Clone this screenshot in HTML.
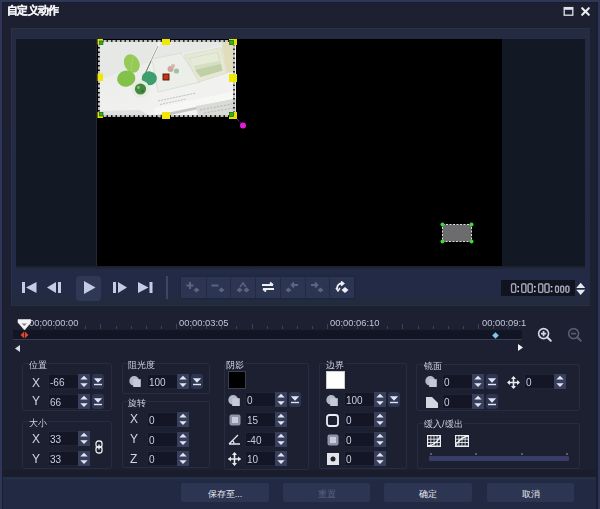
<!DOCTYPE html>
<html><head><meta charset="utf-8"><style>
*{margin:0;padding:0;box-sizing:border-box}
html,body{width:600px;height:509px;overflow:hidden;background:#1c2030;font-family:"Liberation Sans",sans-serif}
.a{position:absolute}
.t{white-space:nowrap;line-height:1;will-change:transform}
.inp{background:#141626;border:1px solid #1f2336;border-right:none}
.spin{background:#373f5c}
.drop{background:#2e3553;border-radius:3px}
.g{border:1px solid #282c41;border-radius:2px}
.lbl{color:#d0d4e2;font-size:9px;background:#1c2030;padding-right:1px}
.xy{color:#d3d7e3;font-size:12px}
.val{color:#c6cedd;font-size:10px}
.btn{border-radius:2px;background:#2c3552;color:#e4e6ee;font-size:9px;text-align:center;padding-top:1.5px}
</style></head>
<body>
<div class="a t " style="left:7px;top:5px;color:#f2f2f6;font-size:10.5px;font-weight:bold;letter-spacing:-0.7px;-webkit-text-stroke:0.35px #f2f2f6">自定义动作</div>
<svg class="a" style="left:563px;top:6px;" width="11" height="11" viewBox="0 0 11 11"><rect x="1.2" y="1.6" width="8.6" height="7.6" fill="none" stroke="#e2e2ea" stroke-width="1.3"/><rect x="1.2" y="1.6" width="8.6" height="2.2" fill="#e2e2ea"/></svg>
<svg class="a" style="left:580px;top:6px;" width="11" height="11" viewBox="0 0 11 11"><path d="M2.2 2.2 L8.8 8.8 M8.8 2.2 L2.2 8.8" stroke="#ececf2" stroke-width="2.1" stroke-linecap="round"/></svg>
<div class="a " style="left:11px;top:28px;width:579px;height:278px;background:linear-gradient(#252c41,#242b42 11px,#232a45 250px);border-top:1px solid #2a3049;border-left:1px solid #2b2f4c"></div>
<div class="a " style="left:12px;top:292px;width:578px;height:13px;background:linear-gradient(#232a45,#222b3c)"></div>
<div class="a " style="left:12px;top:305px;width:578px;height:1px;background:#283041"></div>
<div class="a " style="left:16px;top:39px;width:569px;height:227px;background:#131924"></div>
<div class="a " style="left:16px;top:266px;width:569px;height:3px;background:linear-gradient(#1a1f2b,#222938)"></div>
<div class="a " style="left:96px;top:39px;width:1px;height:227px;background:#222835"></div>
<div class="a " style="left:97px;top:39px;width:405px;height:227px;background:#000"></div>
<svg class="a" style="left:0px;top:0px;" width="260" height="135" viewBox="0 0 260 135">
<defs>
<linearGradient id="pg" x1="0" y1="0" x2="0.6" y2="1"><stop offset="0" stop-color="#e6e8e6"/><stop offset="0.5" stop-color="#eeefed"/><stop offset="1" stop-color="#f2f3f1"/></linearGradient>
<filter id="bl" x="-20%" y="-20%" width="140%" height="140%"><feGaussianBlur stdDeviation="0.7"/></filter>
<filter id="bl2" x="-20%" y="-20%" width="140%" height="140%"><feGaussianBlur stdDeviation="1.2"/></filter>
</defs>
<g>
<rect x="99" y="40.5" width="135" height="75.5" fill="url(#pg)"/>
<g filter="url(#bl)">
<path d="M99 40.5 H236 V58 L150 62 L99 80 Z" fill="#e6e8e5"/>
<path d="M150 60 L222 46 L236 44 L236 98 L154 114 Z" fill="#f1f2ef"/>
<path d="M152 59 L181 53 L200 82 L158 92 Z" fill="#eceee9" stroke="#d6d9d4" stroke-width="0.8"/>
<path d="M184 55 L221 47.5 L227 73 L199 82 Z" fill="#e6e8d6" stroke="#d8dcc8" stroke-width="0.8"/>
<path d="M188.5 58 L218 52 L222.5 70.5 L200.5 77 Z" fill="#d6dec2"/>
<path d="M190 58.5 L217 53 L219 61 L193 66 Z" fill="#e6ead8"/>
<path d="M195 70 L221 64 L222.5 70.5 L200.5 77 Z" fill="#bfcfa6"/>
<path d="M223 41 H234 V72 L227 73 L222 47 Z" fill="#e0dcbc"/>
<circle cx="170.5" cy="69" r="3" fill="#c9a99c"/>
<circle cx="176.5" cy="71" r="2.6" fill="#a4bfa8"/>
<circle cx="173" cy="66" r="2" fill="#d5b8a8"/>
<path d="M154 108 L236 91 L236 99 L156 116 Z" fill="#f7f8f6"/>
<path d="M157 115 L236 98.5 L236 101 L159 117.5 Z" fill="#c4c8c4"/>
<path d="M196 106 L236 99 L236 116 L198 116 Z" fill="#d9dbd7"/>
<path d="M200 110 L232 104 M204 113 L234 108" stroke="#b8bcb8" stroke-width="1.1" stroke-dasharray="2 1.5"/>
<path d="M158 101 L196 93" stroke="#b4b7bd" stroke-width="0.9" stroke-dasharray="2 1"/>
<path d="M160 104.5 L186 99" stroke="#bcbfc4" stroke-width="0.9" stroke-dasharray="2 1"/>
<path d="M99 111 L140 110 L150 116 L99 116 Z" fill="#dfe1df"/>
</g>
<g filter="url(#bl)">
<path d="M141 82 L160 42" stroke="#f4f5f4" stroke-width="2.6"/>
<path d="M142 80 L158 46" stroke="#8f9e8c" stroke-width="0.9"/>
<path d="M146 72 L151 61" stroke="#6f8a6a" stroke-width="1"/>
<ellipse cx="131.8" cy="63.5" rx="7.4" ry="9.6" transform="rotate(-28 131.8 63.5)" fill="#96ca56"/>
<ellipse cx="126.2" cy="78.6" rx="9.2" ry="8" transform="rotate(-12 126.2 78.6)" fill="#82c24b"/>
<ellipse cx="149.3" cy="78.2" rx="7.6" ry="6.9" transform="rotate(10 149.3 78.2)" fill="#3e9f6d"/>
<path d="M131 71 L133 56" stroke="#a6d476" stroke-width="0.8"/>
<circle cx="140.5" cy="89" r="8.8" fill="#e6ece0"/>
<circle cx="140.5" cy="89" r="5.6" fill="#458a40"/>
<circle cx="138.5" cy="87.5" r="1.4" fill="#8fc07e"/>
<circle cx="142.5" cy="91" r="1.2" fill="#2f6a2c"/>
</g>
<rect x="99" y="41" width="135" height="75" fill="none" stroke="#050505" stroke-width="1.6"/>
<rect x="99" y="41" width="135" height="75" fill="none" stroke="#f6f6f6" stroke-width="1.5" stroke-dasharray="3 1.5"/>
<rect x="97.5" y="39" width="5.5" height="5.5" fill="#e8e000"/>
<rect x="229" y="39" width="8" height="6" fill="#e8e000"/>
<rect x="97.5" y="112" width="5.5" height="6" fill="#e8e000"/>
<rect x="229" y="112" width="8" height="7" fill="#e8e000"/>
<rect x="99.5" y="41" width="3.5" height="3.5" fill="#26b526" stroke="#0a500a" stroke-width="0.6"/>
<rect x="229.5" y="40.5" width="4" height="4" fill="#26b526" stroke="#0a500a" stroke-width="0.6"/>
<rect x="99.5" y="112.5" width="3.5" height="3.5" fill="#26b526" stroke="#0a500a" stroke-width="0.6"/>
<rect x="229.5" y="112.5" width="4" height="4" fill="#26b526" stroke="#0a500a" stroke-width="0.6"/>
<rect x="162" y="39" width="8" height="6" fill="#f0e800"/>
<rect x="162" y="112" width="8" height="7" fill="#f0e800"/>
<rect x="97.5" y="73.5" width="5.5" height="7.5" fill="#f0e800"/>
<rect x="229" y="74" width="8" height="8" fill="#f0e800"/>
<rect x="163" y="74" width="6" height="6" fill="#c23510" stroke="#4a1406" stroke-width="0.9"/>
<path d="M237 119 L241 123" stroke="#b03ab0" stroke-width="1" stroke-dasharray="1 1"/>
<circle cx="243" cy="125.5" r="3" fill="#e21ed8"/>
</g>
</svg>
<svg class="a" style="left:440px;top:222px;" width="34" height="22" viewBox="0 0 34 22">
<rect x="2.5" y="2.5" width="29" height="17" fill="#6c6c6e" stroke="#ddd" stroke-width="1" stroke-dasharray="2 1.5"/>
<circle cx="2.5" cy="2.5" r="2" fill="#3ed83e"/><circle cx="31.5" cy="2.5" r="2" fill="#3ed83e"/>
<circle cx="2.5" cy="19.5" r="2" fill="#3ed83e"/><circle cx="31.5" cy="19.5" r="2" fill="#3ed83e"/>
</svg>
<svg class="a" style="left:22px;top:282px;" width="15" height="12" viewBox="0 0 15 12"><rect x="0" y="0" width="3" height="11" fill="#c6cbe4"/><path d="M4 5.5 L14.5 0 L14.5 11 Z" fill="#c6cbe4"/></svg>
<svg class="a" style="left:47px;top:282px;" width="15" height="12" viewBox="0 0 15 12"><path d="M0 5.5 L9 0 L9 11 Z" fill="#c6cbe4"/><rect x="11" y="0" width="3" height="11" fill="#c6cbe4"/></svg>
<div class="a " style="left:76px;top:276px;width:25px;height:25px;background:#2f3855;border-radius:4px"></div>
<svg class="a" style="left:84px;top:281px;" width="12" height="14" viewBox="0 0 12 14"><path d="M0 0 L11.5 6.5 L0 13 Z" fill="#c6cbe4"/></svg>
<svg class="a" style="left:113px;top:282px;" width="15" height="12" viewBox="0 0 15 12"><rect x="0" y="0" width="3" height="11" fill="#c6cbe4"/><path d="M5 0 L14 5.5 L5 11 Z" fill="#c6cbe4"/></svg>
<svg class="a" style="left:138px;top:282px;" width="16" height="12" viewBox="0 0 16 12"><path d="M0 0 L10.5 5.5 L0 11 Z" fill="#c6cbe4"/><rect x="11.5" y="0" width="3" height="11" fill="#c6cbe4"/></svg>
<div class="a " style="left:165.5px;top:276px;width:2.0px;height:23px;background:#3e4664"></div>
<div class="a " style="left:181px;top:277px;width:173px;height:21px;background:#2c3551;box-shadow:0 0 2px #1a2033"></div>
<div class="a " style="left:206px;top:277px;width:1px;height:21px;background:#232b42"></div>
<div class="a " style="left:230px;top:277px;width:1px;height:21px;background:#232b42"></div>
<div class="a " style="left:255px;top:277px;width:1px;height:21px;background:#232b42"></div>
<div class="a " style="left:280px;top:277px;width:1px;height:21px;background:#232b42"></div>
<div class="a " style="left:305px;top:277px;width:1px;height:21px;background:#232b42"></div>
<div class="a " style="left:329px;top:277px;width:1px;height:21px;background:#232b42"></div>
<svg class="a" style="left:185px;top:280.5px;" width="16" height="12" viewBox="0 0 16 12"><path d="M5 1 V8 M1.5 4.5 H8.5" stroke="#5b6483" stroke-width="2"/><path d="M11.5 6.5 L14.5 9 L11.5 11.5 L8.5 9 Z" fill="#5b6483"/></svg>
<svg class="a" style="left:210px;top:280.5px;" width="16" height="12" viewBox="0 0 16 12"><path d="M1.5 4.5 H8.5" stroke="#5b6483" stroke-width="2"/><path d="M11.5 6.5 L14.5 9 L11.5 11.5 L8.5 9 Z" fill="#5b6483"/></svg>
<svg class="a" style="left:235px;top:280.5px;" width="16" height="12" viewBox="0 0 16 12"><path d="M4.5 6.5 L7.5 9 L4.5 11.5 L1.5 9 Z M11.5 6.5 L14.5 9 L11.5 11.5 L8.5 9 Z" fill="#5b6483"/><path d="M5 6 L8 2 L11 6" stroke="#5b6483" stroke-width="1.5" fill="none"/></svg>
<svg class="a" style="left:260px;top:280.5px;" width="16" height="12" viewBox="0 0 16 12"><path d="M2 4 H13 M10 1.5 L13 4 M14 8 H3 M6 10.5 L3 8" stroke="#eef0f6" stroke-width="1.8" fill="none"/></svg>
<svg class="a" style="left:284px;top:280.5px;" width="16" height="12" viewBox="0 0 16 12"><path d="M4.5 6.5 L7.5 9 L4.5 11.5 L1.5 9 Z" fill="#5b6483"/><path d="M14 4 H8 M10 1.5 L7.5 4 L10 6.5" stroke="#5b6483" stroke-width="1.8" fill="none"/></svg>
<svg class="a" style="left:309px;top:280.5px;" width="16" height="12" viewBox="0 0 16 12"><path d="M11.5 6.5 L14.5 9 L11.5 11.5 L8.5 9 Z" fill="#5b6483"/><path d="M2 4 H8 M6 1.5 L8.5 4 L6 6.5" stroke="#5b6483" stroke-width="1.8" fill="none"/></svg>
<svg class="a" style="left:334px;top:280.5px;" width="16" height="12" viewBox="0 0 16 12"><path d="M11 6 L14.5 9 L11 12 L7.5 9 Z" fill="#eef0f6"/><path d="M3 8 Q3 2 9 2.5 M7 0.5 L9.5 2.5 L7 4.5" stroke="#eef0f6" stroke-width="1.8" fill="none"/><path d="M2 7 L4 10 L6 7" stroke="#eef0f6" stroke-width="1.5" fill="none"/></svg>
<div class="a " style="left:501px;top:280px;width:74px;height:16px;background:#11141f"></div>
<svg class="a" style="left:500px;top:280px;" width="75" height="16" viewBox="0 0 75 16"><rect x="11.500000000000023" y="3.9" width="4.2" height="8.5" rx="1.2" fill="none" stroke="#c9cedd" stroke-width="1.25"/><rect x="11.500000000000023" y="3.9" width="4.2" height="8.5" rx="1.2" fill="none" stroke="#60667a" stroke-width="0.4"/><rect x="21.699999999999953" y="3.9" width="4.2" height="8.5" rx="1.2" fill="none" stroke="#c9cedd" stroke-width="1.25"/><rect x="21.699999999999953" y="3.9" width="4.2" height="8.5" rx="1.2" fill="none" stroke="#60667a" stroke-width="0.4"/><rect x="28.100000000000044" y="3.9" width="4.2" height="8.5" rx="1.2" fill="none" stroke="#c9cedd" stroke-width="1.25"/><rect x="28.100000000000044" y="3.9" width="4.2" height="8.5" rx="1.2" fill="none" stroke="#60667a" stroke-width="0.4"/><rect x="38.600000000000044" y="3.9" width="4.2" height="8.5" rx="1.2" fill="none" stroke="#c9cedd" stroke-width="1.25"/><rect x="38.600000000000044" y="3.9" width="4.2" height="8.5" rx="1.2" fill="none" stroke="#60667a" stroke-width="0.4"/><rect x="44.9" y="3.9" width="4.2" height="8.5" rx="1.2" fill="none" stroke="#c9cedd" stroke-width="1.25"/><rect x="44.9" y="3.9" width="4.2" height="8.5" rx="1.2" fill="none" stroke="#60667a" stroke-width="0.4"/><rect x="55.50000000000002" y="6.099999999999989" width="3.0" height="6.2" rx="1.2" fill="none" stroke="#c9cedd" stroke-width="1.25"/><rect x="55.50000000000002" y="6.099999999999989" width="3.0" height="6.2" rx="1.2" fill="none" stroke="#60667a" stroke-width="0.4"/><rect x="60.69999999999995" y="6.099999999999989" width="3.0" height="6.2" rx="1.2" fill="none" stroke="#c9cedd" stroke-width="1.25"/><rect x="60.69999999999995" y="6.099999999999989" width="3.0" height="6.2" rx="1.2" fill="none" stroke="#60667a" stroke-width="0.4"/><rect x="65.9" y="6.099999999999989" width="3.0" height="6.2" rx="1.2" fill="none" stroke="#c9cedd" stroke-width="1.25"/><rect x="65.9" y="6.099999999999989" width="3.0" height="6.2" rx="1.2" fill="none" stroke="#60667a" stroke-width="0.4"/><rect x="17.400000000000045" y="6" width="1.6" height="1.6" fill="#c9cedd"/><rect x="17.400000000000045" y="10.5" width="1.6" height="1.6" fill="#c9cedd"/><rect x="33.99999999999996" y="6" width="1.6" height="1.6" fill="#c9cedd"/><rect x="33.99999999999996" y="10.5" width="1.6" height="1.6" fill="#c9cedd"/><rect x="50.800000000000026" y="6" width="1.6" height="1.6" fill="#c9cedd"/><rect x="50.800000000000026" y="10.5" width="1.6" height="1.6" fill="#c9cedd"/></svg>
<svg class="a" style="left:575px;top:282px;" width="12" height="14" viewBox="0 0 12 14"><path d="M1.2 6 L5.7 0.8 L10.2 6 Z M1.2 7.8 L5.7 13 L10.2 7.8 Z" fill="#e8eaf2"/></svg>
<div class="a t " style="left:29px;top:318px;color:#bfc6d8;font-size:9.4px">00:00:00:00</div>
<div class="a t " style="left:179px;top:318px;color:#bfc6d8;font-size:9.4px">00:00:03:05</div>
<div class="a t " style="left:330px;top:318px;color:#bfc6d8;font-size:9.4px">00:00:06:10</div>
<div class="a t " style="left:482px;top:318px;color:#bfc6d8;font-size:9.4px">00:00:09:1</div>
<div class="a " style="left:25px;top:324px;width:1px;height:5px;background:#3c4258"></div>
<div class="a " style="left:40px;top:326px;width:1px;height:3px;background:#3c4258"></div>
<div class="a " style="left:55px;top:326px;width:1px;height:3px;background:#3c4258"></div>
<div class="a " style="left:70px;top:326px;width:1px;height:3px;background:#3c4258"></div>
<div class="a " style="left:85px;top:326px;width:1px;height:3px;background:#3c4258"></div>
<div class="a " style="left:100px;top:324px;width:1px;height:5px;background:#3c4258"></div>
<div class="a " style="left:116px;top:326px;width:1px;height:3px;background:#3c4258"></div>
<div class="a " style="left:131px;top:326px;width:1px;height:3px;background:#3c4258"></div>
<div class="a " style="left:146px;top:326px;width:1px;height:3px;background:#3c4258"></div>
<div class="a " style="left:161px;top:326px;width:1px;height:3px;background:#3c4258"></div>
<div class="a " style="left:176px;top:324px;width:1px;height:5px;background:#3c4258"></div>
<div class="a " style="left:191px;top:326px;width:1px;height:3px;background:#3c4258"></div>
<div class="a " style="left:206px;top:326px;width:1px;height:3px;background:#3c4258"></div>
<div class="a " style="left:221px;top:326px;width:1px;height:3px;background:#3c4258"></div>
<div class="a " style="left:236px;top:326px;width:1px;height:3px;background:#3c4258"></div>
<div class="a " style="left:252px;top:324px;width:1px;height:5px;background:#3c4258"></div>
<div class="a " style="left:267px;top:326px;width:1px;height:3px;background:#3c4258"></div>
<div class="a " style="left:282px;top:326px;width:1px;height:3px;background:#3c4258"></div>
<div class="a " style="left:297px;top:326px;width:1px;height:3px;background:#3c4258"></div>
<div class="a " style="left:312px;top:326px;width:1px;height:3px;background:#3c4258"></div>
<div class="a " style="left:327px;top:324px;width:1px;height:5px;background:#3c4258"></div>
<div class="a " style="left:342px;top:326px;width:1px;height:3px;background:#3c4258"></div>
<div class="a " style="left:357px;top:326px;width:1px;height:3px;background:#3c4258"></div>
<div class="a " style="left:372px;top:326px;width:1px;height:3px;background:#3c4258"></div>
<div class="a " style="left:387px;top:326px;width:1px;height:3px;background:#3c4258"></div>
<div class="a " style="left:402px;top:324px;width:1px;height:5px;background:#3c4258"></div>
<div class="a " style="left:418px;top:326px;width:1px;height:3px;background:#3c4258"></div>
<div class="a " style="left:433px;top:326px;width:1px;height:3px;background:#3c4258"></div>
<div class="a " style="left:448px;top:326px;width:1px;height:3px;background:#3c4258"></div>
<div class="a " style="left:463px;top:326px;width:1px;height:3px;background:#3c4258"></div>
<div class="a " style="left:478px;top:324px;width:1px;height:5px;background:#3c4258"></div>
<div class="a " style="left:493px;top:326px;width:1px;height:3px;background:#3c4258"></div>
<div class="a " style="left:508px;top:326px;width:1px;height:3px;background:#3c4258"></div>
<div class="a " style="left:13px;top:330px;width:509px;height:10px;background:#121524;border-bottom:1px solid #383d54"></div>
<svg class="a" style="left:17px;top:319px;" width="15" height="12" viewBox="0 0 15 12"><path d="M1 0.6 H13.8 V3.4 L7.5 11 L1 3.4 Z" fill="#f4f4f6" stroke="#f4f4f6" stroke-width="0.6" stroke-linejoin="round"/><path d="M4.6 4.6 H9.9 L7.3 7 Z" fill="#7e7e88"/></svg>
<svg class="a" style="left:20px;top:331px;" width="9" height="8" viewBox="0 0 9 8"><path d="M4.1 0.6 L0.5 3.9 L4.1 7.2 Z" fill="#e4462c"/><path d="M4.9 0.6 L8.5 3.9 L4.9 7.2 Z" fill="#e4462c"/></svg>
<svg class="a" style="left:491px;top:331px;" width="9" height="9" viewBox="0 0 9 9"><path d="M4.5 1.2 L7.8 4.5 L4.5 7.8 L1.2 4.5 Z" fill="#7cc9ea"/></svg>
<svg class="a" style="left:15px;top:345px;" width="6" height="8" viewBox="0 0 6 8"><path d="M5 0 L5 7 L0 3.5 Z" fill="#d8dce8"/></svg>
<svg class="a" style="left:518px;top:344px;" width="6" height="8" viewBox="0 0 6 8"><path d="M0 0 L0 7 L5 3.5 Z" fill="#f2f2f6"/></svg>
<svg class="a" style="left:537px;top:327px;" width="16" height="16" viewBox="0 0 16 16"><circle cx="6.6" cy="6.6" r="5" fill="none" stroke="#d6d9e3" stroke-width="1.6"/><path d="M4 6.6 H9.2 M6.6 4 V9.2" stroke="#d6d9e3" stroke-width="1.7"/><path d="M10.2 10.2 L13.8 13.8" stroke="#d6d9e3" stroke-width="2" stroke-linecap="round"/></svg>
<svg class="a" style="left:567px;top:327px;" width="16" height="16" viewBox="0 0 16 16"><circle cx="6.6" cy="6.6" r="5" fill="none" stroke="#555c74" stroke-width="1.6"/><path d="M4 6.6 H9.2" stroke="#555c74" stroke-width="1.7"/><path d="M10.2 10.2 L13.8 13.8" stroke="#555c74" stroke-width="2" stroke-linecap="round"/></svg>
<div class="a g" style="left:22px;top:363px;width:90px;height:48px;"></div>
<div class="a t lbl" style="left:29px;top:360.5px;">位置</div>
<div class="a t xy" style="left:32px;top:377px;">X</div>
<div class="a inp" style="left:48px;top:374px;width:30px;height:15px;"></div>
<div class="a t val" style="left:50px;top:378px;">-66</div>
<svg class="a spin" style="left:78px;top:374px" width="12" height="15" viewBox="0 0 12 15"><path d="M2.3 5.6 L6 1.8 L9.7 5.6 Z M2.3 9.2 L6 13 L9.7 9.2 Z" fill="#e2e5ef"/></svg>
<svg class="a drop" style="left:92px;top:374px" width="12" height="15" viewBox="0 0 12 15"><path d="M1.8 4.2 H10.2 L6 8.8 Z" fill="#e2e5ef"/><rect x="2" y="9.8" width="8" height="1.4" fill="#e2e5ef"/></svg>
<div class="a t xy" style="left:32px;top:395px;">Y</div>
<div class="a inp" style="left:48px;top:394px;width:30px;height:15px;"></div>
<div class="a t val" style="left:50px;top:398px;">66</div>
<svg class="a spin" style="left:78px;top:394px" width="12" height="15" viewBox="0 0 12 15"><path d="M2.3 5.6 L6 1.8 L9.7 5.6 Z M2.3 9.2 L6 13 L9.7 9.2 Z" fill="#e2e5ef"/></svg>
<svg class="a drop" style="left:92px;top:394px" width="12" height="15" viewBox="0 0 12 15"><path d="M1.8 4.2 H10.2 L6 8.8 Z" fill="#e2e5ef"/><rect x="2" y="9.8" width="8" height="1.4" fill="#e2e5ef"/></svg>
<div class="a g" style="left:22px;top:421px;width:90px;height:48px;"></div>
<div class="a t lbl" style="left:29px;top:418.5px;">大小</div>
<div class="a t xy" style="left:32px;top:433px;">X</div>
<div class="a inp" style="left:48px;top:431px;width:30px;height:15px;"></div>
<div class="a t val" style="left:50px;top:435px;">33</div>
<svg class="a spin" style="left:78px;top:431px" width="12" height="15" viewBox="0 0 12 15"><path d="M2.3 5.6 L6 1.8 L9.7 5.6 Z M2.3 9.2 L6 13 L9.7 9.2 Z" fill="#e2e5ef"/></svg>
<div class="a t xy" style="left:32px;top:453px;">Y</div>
<div class="a inp" style="left:48px;top:451px;width:30px;height:15px;"></div>
<div class="a t val" style="left:50px;top:455px;">33</div>
<svg class="a spin" style="left:78px;top:451px" width="12" height="15" viewBox="0 0 12 15"><path d="M2.3 5.6 L6 1.8 L9.7 5.6 Z M2.3 9.2 L6 13 L9.7 9.2 Z" fill="#e2e5ef"/></svg>
<svg class="a" style="left:95px;top:440px;" width="8" height="14" viewBox="0 0 8 14"><rect x="1" y="1" width="6" height="6.5" rx="2.5" fill="none" stroke="#e8eaf0" stroke-width="1.3"/><rect x="1" y="6.5" width="6" height="6.5" rx="2.5" fill="none" stroke="#e8eaf0" stroke-width="1.3"/><path d="M4 4.5 V9.5" stroke="#e8eaf0" stroke-width="1.3"/></svg>
<div class="a g" style="left:122px;top:363px;width:88px;height:31px;"></div>
<div class="a t lbl" style="left:128px;top:360.5px;">阻光度</div>
<svg class="a" style="left:129px;top:376px;" width="12" height="11" viewBox="0 0 12 11"><circle cx="5.2" cy="4.9" r="4.9" fill="#b4b8c8"/><rect x="4.2" y="3.2" width="7.6" height="7.8" fill="#c6c9d7"/></svg>
<div class="a inp" style="left:147px;top:374px;width:30px;height:15px;"></div>
<div class="a t val" style="left:149px;top:378px;">100</div>
<svg class="a spin" style="left:177px;top:374px" width="12" height="15" viewBox="0 0 12 15"><path d="M2.3 5.6 L6 1.8 L9.7 5.6 Z M2.3 9.2 L6 13 L9.7 9.2 Z" fill="#e2e5ef"/></svg>
<svg class="a drop" style="left:191px;top:374px" width="12" height="15" viewBox="0 0 12 15"><path d="M1.8 4.2 H10.2 L6 8.8 Z" fill="#e2e5ef"/><rect x="2" y="9.8" width="8" height="1.4" fill="#e2e5ef"/></svg>
<div class="a g" style="left:122px;top:401px;width:88px;height:67px;"></div>
<div class="a t lbl" style="left:128px;top:398.5px;">旋转</div>
<div class="a t xy" style="left:130px;top:413px;">X</div>
<div class="a inp" style="left:147px;top:412px;width:30px;height:15px;"></div>
<div class="a t val" style="left:149px;top:416px;">0</div>
<svg class="a spin" style="left:177px;top:412px" width="12" height="15" viewBox="0 0 12 15"><path d="M2.3 5.6 L6 1.8 L9.7 5.6 Z M2.3 9.2 L6 13 L9.7 9.2 Z" fill="#e2e5ef"/></svg>
<div class="a t xy" style="left:130px;top:433px;">Y</div>
<div class="a inp" style="left:147px;top:432px;width:30px;height:15px;"></div>
<div class="a t val" style="left:149px;top:436px;">0</div>
<svg class="a spin" style="left:177px;top:432px" width="12" height="15" viewBox="0 0 12 15"><path d="M2.3 5.6 L6 1.8 L9.7 5.6 Z M2.3 9.2 L6 13 L9.7 9.2 Z" fill="#e2e5ef"/></svg>
<div class="a t xy" style="left:130px;top:453px;">Z</div>
<div class="a inp" style="left:147px;top:451px;width:30px;height:15px;"></div>
<div class="a t val" style="left:149px;top:455px;">0</div>
<svg class="a spin" style="left:177px;top:451px" width="12" height="15" viewBox="0 0 12 15"><path d="M2.3 5.6 L6 1.8 L9.7 5.6 Z M2.3 9.2 L6 13 L9.7 9.2 Z" fill="#e2e5ef"/></svg>
<div class="a g" style="left:224px;top:363px;width:85px;height:107px;"></div>
<div class="a t lbl" style="left:226px;top:360.5px;">阴影</div>
<div class="a " style="left:228px;top:371px;width:18px;height:18px;background:#000;border:1px solid #3a3f55"></div>
<svg class="a" style="left:228px;top:395px;" width="12" height="11" viewBox="0 0 12 11"><circle cx="5.2" cy="4.9" r="4.9" fill="#b4b8c8"/><rect x="4.2" y="3.2" width="7.6" height="7.8" fill="#c6c9d7"/></svg>
<div class="a inp" style="left:245px;top:392px;width:30px;height:15px;"></div>
<div class="a t val" style="left:247px;top:396px;">0</div>
<svg class="a spin" style="left:275px;top:392px" width="12" height="15" viewBox="0 0 12 15"><path d="M2.3 5.6 L6 1.8 L9.7 5.6 Z M2.3 9.2 L6 13 L9.7 9.2 Z" fill="#e2e5ef"/></svg>
<svg class="a drop" style="left:289px;top:392px" width="12" height="15" viewBox="0 0 12 15"><path d="M1.8 4.2 H10.2 L6 8.8 Z" fill="#e2e5ef"/><rect x="2" y="9.8" width="8" height="1.4" fill="#e2e5ef"/></svg>
<svg class="a" style="left:229px;top:414px;" width="12" height="12" viewBox="0 0 12 12"><rect x="0.5" y="0.5" width="11" height="11" rx="2" fill="#8e94a8"/><rect x="3" y="3" width="6" height="6" fill="#c8ccd8"/></svg>
<div class="a inp" style="left:245px;top:412px;width:30px;height:15px;"></div>
<div class="a t val" style="left:247px;top:416px;">15</div>
<svg class="a spin" style="left:275px;top:412px" width="12" height="15" viewBox="0 0 12 15"><path d="M2.3 5.6 L6 1.8 L9.7 5.6 Z M2.3 9.2 L6 13 L9.7 9.2 Z" fill="#e2e5ef"/></svg>
<svg class="a" style="left:228px;top:433px;" width="13" height="12" viewBox="0 0 13 12"><path d="M1 11 H12 M1 11 L10 2 M6 11 Q6 7 3.5 8.5" stroke="#e0e3ec" stroke-width="1.4" fill="none"/></svg>
<div class="a inp" style="left:245px;top:432px;width:30px;height:15px;"></div>
<div class="a t val" style="left:247px;top:436px;">-40</div>
<svg class="a spin" style="left:275px;top:432px" width="12" height="15" viewBox="0 0 12 15"><path d="M2.3 5.6 L6 1.8 L9.7 5.6 Z M2.3 9.2 L6 13 L9.7 9.2 Z" fill="#e2e5ef"/></svg>
<svg class="a" style="left:228px;top:452px;" width="13" height="14" viewBox="0 0 13 14"><path d="M6.5 1 V13 M0.5 7 H12.5" stroke="#e8eaf0" stroke-width="1.6"/><path d="M6.5 0 L9 3 H4 Z M6.5 14 L9 11 H4 Z M0 7 L3 4.5 V9.5 Z M13 7 L10 4.5 V9.5 Z" fill="#e8eaf0"/></svg>
<div class="a inp" style="left:245px;top:451px;width:30px;height:15px;"></div>
<div class="a t val" style="left:247px;top:455px;">10</div>
<svg class="a spin" style="left:275px;top:451px" width="12" height="15" viewBox="0 0 12 15"><path d="M2.3 5.6 L6 1.8 L9.7 5.6 Z M2.3 9.2 L6 13 L9.7 9.2 Z" fill="#e2e5ef"/></svg>
<div class="a g" style="left:319px;top:363px;width:88px;height:106px;"></div>
<div class="a t lbl" style="left:326px;top:360.5px;">边界</div>
<div class="a " style="left:326px;top:371px;width:19px;height:18px;background:#fff;border:1px solid #ccc"></div>
<svg class="a" style="left:326px;top:395px;" width="12" height="11" viewBox="0 0 12 11"><circle cx="5.2" cy="4.9" r="4.9" fill="#b4b8c8"/><rect x="4.2" y="3.2" width="7.6" height="7.8" fill="#c6c9d7"/></svg>
<div class="a inp" style="left:344px;top:392px;width:30px;height:15px;"></div>
<div class="a t val" style="left:346px;top:396px;">100</div>
<svg class="a spin" style="left:374px;top:392px" width="12" height="15" viewBox="0 0 12 15"><path d="M2.3 5.6 L6 1.8 L9.7 5.6 Z M2.3 9.2 L6 13 L9.7 9.2 Z" fill="#e2e5ef"/></svg>
<svg class="a drop" style="left:388px;top:392px" width="12" height="15" viewBox="0 0 12 15"><path d="M1.8 4.2 H10.2 L6 8.8 Z" fill="#e2e5ef"/><rect x="2" y="9.8" width="8" height="1.4" fill="#e2e5ef"/></svg>
<svg class="a" style="left:326px;top:414px;" width="13" height="13" viewBox="0 0 13 13"><rect x="1" y="1" width="11" height="11" rx="2.5" fill="none" stroke="#eceef4" stroke-width="1.8"/></svg>
<div class="a inp" style="left:344px;top:412px;width:30px;height:15px;"></div>
<div class="a t val" style="left:346px;top:416px;">0</div>
<svg class="a spin" style="left:374px;top:412px" width="12" height="15" viewBox="0 0 12 15"><path d="M2.3 5.6 L6 1.8 L9.7 5.6 Z M2.3 9.2 L6 13 L9.7 9.2 Z" fill="#e2e5ef"/></svg>
<svg class="a" style="left:327px;top:434px;" width="12" height="12" viewBox="0 0 12 12"><rect x="0.5" y="0.5" width="11" height="11" rx="2" fill="#8e94a8"/><rect x="3" y="3" width="6" height="6" fill="#c8ccd8"/></svg>
<div class="a inp" style="left:344px;top:432px;width:30px;height:15px;"></div>
<div class="a t val" style="left:346px;top:436px;">0</div>
<svg class="a spin" style="left:374px;top:432px" width="12" height="15" viewBox="0 0 12 15"><path d="M2.3 5.6 L6 1.8 L9.7 5.6 Z M2.3 9.2 L6 13 L9.7 9.2 Z" fill="#e2e5ef"/></svg>
<svg class="a" style="left:327px;top:453px;" width="12" height="12" viewBox="0 0 12 12"><rect x="0" y="0" width="12" height="12" fill="#e2e4ec"/><circle cx="6" cy="6" r="2.5" fill="#222"/></svg>
<div class="a inp" style="left:344px;top:451px;width:30px;height:15px;"></div>
<div class="a t val" style="left:346px;top:455px;">0</div>
<svg class="a spin" style="left:374px;top:451px" width="12" height="15" viewBox="0 0 12 15"><path d="M2.3 5.6 L6 1.8 L9.7 5.6 Z M2.3 9.2 L6 13 L9.7 9.2 Z" fill="#e2e5ef"/></svg>
<div class="a g" style="left:416px;top:364px;width:164px;height:47px;"></div>
<div class="a t lbl" style="left:424px;top:361.5px;">镜面</div>
<svg class="a" style="left:425px;top:376px;" width="12" height="11" viewBox="0 0 12 11"><circle cx="5.2" cy="4.9" r="4.9" fill="#b4b8c8"/><rect x="4.2" y="3.2" width="7.6" height="7.8" fill="#c6c9d7"/></svg>
<div class="a inp" style="left:442px;top:374px;width:30px;height:15px;"></div>
<div class="a t val" style="left:444px;top:378px;">0</div>
<svg class="a spin" style="left:472px;top:374px" width="12" height="15" viewBox="0 0 12 15"><path d="M2.3 5.6 L6 1.8 L9.7 5.6 Z M2.3 9.2 L6 13 L9.7 9.2 Z" fill="#e2e5ef"/></svg>
<svg class="a drop" style="left:486px;top:374px" width="12" height="15" viewBox="0 0 12 15"><path d="M1.8 4.2 H10.2 L6 8.8 Z" fill="#e2e5ef"/><rect x="2" y="9.8" width="8" height="1.4" fill="#e2e5ef"/></svg>
<svg class="a" style="left:507px;top:376px;" width="13" height="13" viewBox="0 0 13 13"><path d="M6.5 1 V12 M1 6.5 H12" stroke="#e8eaf0" stroke-width="1.6"/><path d="M6.5 0 L9 3 H4 Z M6.5 13 L9 10 H4 Z M0 6.5 L3 4 V9 Z M13 6.5 L10 4 V9 Z" fill="#e8eaf0"/></svg>
<div class="a inp" style="left:524px;top:374px;width:30px;height:15px;"></div>
<div class="a t val" style="left:526px;top:378px;">0</div>
<svg class="a spin" style="left:554px;top:374px" width="12" height="15" viewBox="0 0 12 15"><path d="M2.3 5.6 L6 1.8 L9.7 5.6 Z M2.3 9.2 L6 13 L9.7 9.2 Z" fill="#e2e5ef"/></svg>
<svg class="a" style="left:426px;top:397px;" width="12" height="11" viewBox="0 0 12 11"><path d="M0 0 H6 L12 6 V11 H0 Z" fill="#d4d7e2"/></svg>
<div class="a inp" style="left:442px;top:394px;width:30px;height:15px;"></div>
<div class="a t val" style="left:444px;top:398px;">0</div>
<svg class="a spin" style="left:472px;top:394px" width="12" height="15" viewBox="0 0 12 15"><path d="M2.3 5.6 L6 1.8 L9.7 5.6 Z M2.3 9.2 L6 13 L9.7 9.2 Z" fill="#e2e5ef"/></svg>
<svg class="a drop" style="left:486px;top:394px" width="12" height="15" viewBox="0 0 12 15"><path d="M1.8 4.2 H10.2 L6 8.8 Z" fill="#e2e5ef"/><rect x="2" y="9.8" width="8" height="1.4" fill="#e2e5ef"/></svg>
<div class="a g" style="left:417px;top:423px;width:163px;height:46px;"></div>
<div class="a t lbl" style="left:424px;top:419.5px;">缓入/缓出</div>
<svg class="a" style="left:427px;top:435px;" width="14" height="12" viewBox="0 0 14 12"><rect x="0" y="0" width="14" height="12" fill="#eceef4"/><rect x="1.2" y="1.2" width="2.3" height="2.5" fill="#1c1f2c"/><rect x="1.2" y="4.6" width="2.3" height="2.5" fill="#1c1f2c"/><rect x="1.2" y="8.0" width="2.3" height="2.5" fill="#1c1f2c"/><rect x="4.3" y="1.2" width="2.3" height="2.5" fill="#1c1f2c"/><rect x="4.3" y="4.6" width="2.3" height="2.5" fill="#1c1f2c"/><rect x="4.3" y="8.0" width="2.3" height="2.5" fill="#1c1f2c"/><rect x="7.4" y="1.2" width="2.3" height="2.5" fill="#1c1f2c"/><rect x="7.4" y="4.6" width="2.3" height="2.5" fill="#1c1f2c"/><rect x="7.4" y="8.0" width="2.3" height="2.5" fill="#1c1f2c"/><rect x="10.5" y="1.2" width="2.3" height="2.5" fill="#1c1f2c"/><rect x="10.5" y="4.6" width="2.3" height="2.5" fill="#1c1f2c"/><rect x="10.5" y="8.0" width="2.3" height="2.5" fill="#1c1f2c"/><path d="M0.5 11 Q9 10 13.5 1" stroke="#f0f2f6" stroke-width="1.3" fill="none"/></svg>
<svg class="a" style="left:455px;top:435px;" width="14" height="12" viewBox="0 0 14 12"><rect x="0" y="0" width="14" height="12" fill="#eceef4"/><rect x="1.2" y="1.2" width="2.3" height="2.5" fill="#1c1f2c"/><rect x="1.2" y="4.6" width="2.3" height="2.5" fill="#1c1f2c"/><rect x="1.2" y="8.0" width="2.3" height="2.5" fill="#1c1f2c"/><rect x="4.3" y="1.2" width="2.3" height="2.5" fill="#1c1f2c"/><rect x="4.3" y="4.6" width="2.3" height="2.5" fill="#1c1f2c"/><rect x="4.3" y="8.0" width="2.3" height="2.5" fill="#1c1f2c"/><rect x="7.4" y="1.2" width="2.3" height="2.5" fill="#1c1f2c"/><rect x="7.4" y="4.6" width="2.3" height="2.5" fill="#1c1f2c"/><rect x="7.4" y="8.0" width="2.3" height="2.5" fill="#1c1f2c"/><rect x="10.5" y="1.2" width="2.3" height="2.5" fill="#1c1f2c"/><rect x="10.5" y="4.6" width="2.3" height="2.5" fill="#1c1f2c"/><rect x="10.5" y="8.0" width="2.3" height="2.5" fill="#1c1f2c"/><path d="M0.5 11 Q5 2 13.5 1" stroke="#f0f2f6" stroke-width="1.3" fill="none"/></svg>
<div class="a " style="left:429px;top:456px;width:140px;height:5px;background:#383c69;border-radius:1px"></div>
<div class="a " style="left:430px;top:453px;width:2px;height:2px;background:#6a7088;border-radius:1px"></div>
<div class="a " style="left:475px;top:453px;width:2px;height:2px;background:#6a7088;border-radius:1px"></div>
<div class="a " style="left:521px;top:453px;width:2px;height:2px;background:#6a7088;border-radius:1px"></div>
<div class="a " style="left:566px;top:453px;width:2px;height:2px;background:#6a7088;border-radius:1px"></div>
<div class="a " style="left:2px;top:470px;width:596px;height:7px;background:#1a1d2c"></div>
<div class="a " style="left:2px;top:477px;width:596px;height:32px;background:linear-gradient(#253049,#222a43 4px)"></div>
<div class="a btn" style="left:181px;top:483px;width:88px;height:19px;line-height:19px;color:#e8eaf0">保存至...</div>
<div class="a btn" style="left:283px;top:483px;width:87px;height:19px;line-height:19px;color:#5a6280">重置</div>
<div class="a btn" style="left:384px;top:483px;width:88px;height:19px;line-height:19px;color:#e8eaf0">确定</div>
<div class="a btn" style="left:487px;top:483px;width:87px;height:19px;line-height:19px;color:#e8eaf0">取消</div>
<div class="a " style="left:2px;top:2px;width:596px;height:1px;background:#171c2e"></div>
<div class="a " style="left:2px;top:2px;width:1px;height:507px;background:#191d30"></div>
<div class="a " style="left:0px;top:0px;width:2px;height:509px;background:#2f3658"></div>
<div class="a " style="left:596px;top:2px;width:2px;height:507px;background:#1b1e31"></div>
<div class="a " style="left:598px;top:0px;width:2px;height:509px;background:#2d3456"></div>
<div class="a " style="left:0px;top:0px;width:600px;height:2px;background:#2f3757"></div>
</body></html>
